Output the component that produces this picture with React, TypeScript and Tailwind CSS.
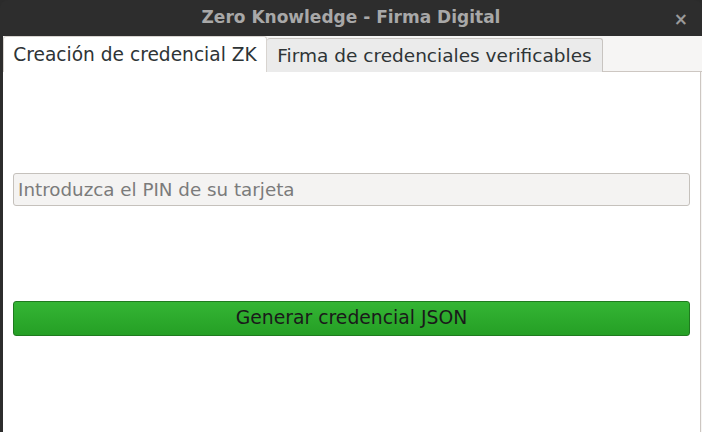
import React from "react";

const font = { fontFamily: '"DejaVu Sans", "Noto Sans", sans-serif' };

const App = () => {
  return (
    <div className="h-[432px] w-[702px] overflow-hidden bg-[#2b2b2b]" style={font}>
      <div className="flex h-full flex-col rounded-t-[8px] bg-[#2d2d2d]">
        {/* title bar */}
        <div className="relative flex h-[36px] shrink-0 items-center justify-center">
          <span className="text-[17px] font-bold text-[#a8a8a8]">Zero Knowledge - Firma Digital</span>
          <span className="absolute right-[14px] top-[7px] text-[17px] font-bold text-[#9a9a9a]">×</span>
        </div>

        {/* body */}
        <div className="ml-[3px] flex flex-1 flex-col bg-[#f6f5f4]">
          <div className="flex h-[36px] shrink-0 items-end">
            <div className="flex h-[36px] w-[264px] items-center justify-center rounded-t-[3px] border border-b-0 border-[#d8d4d0] bg-white pt-[1px] text-[18.6px] text-[#2e3436]">
              Creación de credencial ZK
            </div>
            <div className="flex h-[34px] w-[336px] items-center justify-center rounded-t-[3px] border border-b-0 border-l-0 border-[#c8c4c0] bg-[#ebebeb] pt-[1px] text-[18.5px] text-[#2e3436]">
              Firma de credenciales verificables
            </div>
            <div className="h-full flex-1 border-b border-[#cdc7c2]" />
          </div>

          <div className="mr-[1px] flex flex-1 flex-col border-r border-[#cdc7c2] bg-white px-[10px]">
            <div className="mt-[101px] flex h-[33px] items-center rounded-[3px] border border-[#c5c1bc] bg-[#f4f3f2] px-[4px] text-[18.3px] text-[#7b7b7b]">
              Introduzca el PIN de su tarjeta
            </div>
            <button className="mt-[95px] flex h-[35px] items-center justify-center rounded-[3px] border border-[#1f7a1f] bg-gradient-to-b from-[#34b534] to-[#259f25] text-[18.8px] text-[#1a1a1a]">
              Generar credencial JSON
            </button>
          </div>
        </div>
      </div>
    </div>
  );
};

export default App;
